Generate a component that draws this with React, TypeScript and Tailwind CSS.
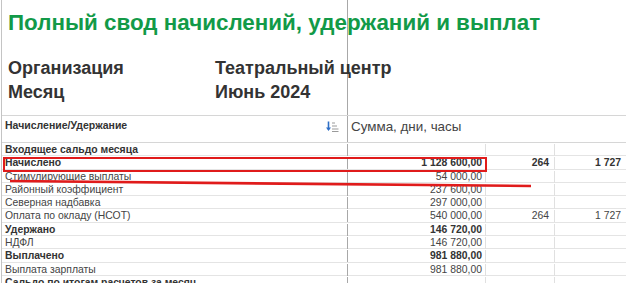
const rows = [
  { name: "Входящее сальдо месяца", sum: "", days: "", hours: "", bold: true },
  { name: "Начислено", sum: "1 128 600,00", days: "264", hours: "1 727", bold: true },
  { name: "Стимулирующие выплаты", sum: "54 000,00", days: "", hours: "" },
  { name: "Районный коэффициент", sum: "237 600,00", days: "", hours: "" },
  { name: "Северная надбавка", sum: "297 000,00", days: "", hours: "" },
  { name: "Оплата по окладу (НСОТ)", sum: "540 000,00", days: "264", hours: "1 727" },
  { name: "Удержано", sum: "146 720,00", days: "", hours: "", bold: true },
  { name: "НДФЛ", sum: "146 720,00", days: "", hours: "" },
  { name: "Выплачено", sum: "981 880,00", days: "", hours: "", bold: true },
  { name: "Выплата зарплаты", sum: "981 880,00", days: "", hours: "" },
  { name: "Сальдо по итогам расчетов за месяц", sum: "", days: "", hours: "", bold: true },
];

const SortIcon = () => (
  <svg width="13" height="11" viewBox="0 0 13 11" className="shrink-0">
    <path d="M2.5 0.5v8" stroke="#2f6fc6" strokeWidth="1.6" />
    <path d="M0 6.5l2.5 3.5 2.5-3.5z" fill="#2f6fc6" />
    <path d="M6 2h3M6 5h5M6 8h6.5M6 10.5h6.5" stroke="#9a9a9a" strokeWidth="1" />
  </svg>
);

export default function App() {
  return (
    <div
      className="relative w-[626px] h-[283px] overflow-hidden bg-white pl-px text-[#333]"
      style={{ fontFamily: '"Liberation Sans", Arial, sans-serif' }}
    >
      <div className="border-l border-[#c4c4c4] h-full flex flex-col">
        {/* report head */}
        <div className="grid grid-cols-[346px_1fr] h-[115px] shrink-0">
          <div className="border-r border-[#a8a8a8] pl-[6px] pt-[9px] whitespace-nowrap">
            <div className="text-[22.4px] leading-[28px] font-bold text-[#129a48]">
              Полный свод начислений, удержаний и выплат
            </div>
            <div className="mt-[19px] grid grid-cols-[207px_1fr] text-[18px] leading-[24px] font-bold text-[#333]">
              <span>Организация</span>
              <span>Театральный центр</span>
              <span>Месяц</span>
              <span>Июнь 2024</span>
            </div>
          </div>
          <div />
        </div>

        {/* table header */}
        <div className="grid grid-cols-[346px_1fr] h-[28px] shrink-0 border-y border-[#d6d6d6]">
          <div className="border-r border-[#a8a8a8] flex items-start justify-between pl-[3px] pr-[8px] pt-[3px]">
            <span className="text-[10.5px] font-bold text-[#333] leading-[13px]">Начисление/Удержание</span>
            <span className="pt-[2px]">
              <SortIcon />
            </span>
          </div>
          <div className="pl-[3px] pt-[2px] text-[13.4px] leading-[17px] text-[#444]">Сумма, дни, часы</div>
        </div>

        {/* table body */}
        <div className="flex flex-col">
          {rows.map((r, i) => (
            <div
              key={i}
              className={`grid grid-cols-[346px_138px_69px_1fr] h-[13.3px] border-b border-[#e4e4e4] text-[10.4px] leading-[12px] pt-px ${
                r.bold ? "font-bold text-[#333]" : "text-[#444]"
              }`}
            >
              <div className="border-r border-[#a8a8a8] pl-[3px] whitespace-nowrap">{r.name}</div>
              <div className="border-r border-[#e0e0e0] pr-[3px] text-right">{r.sum}</div>
              <div className="border-r border-[#e0e0e0] pr-[5px] text-right">{r.days}</div>
              <div className="pr-[5px] text-right">{r.hours}</div>
            </div>
          ))}
        </div>
      </div>

      {/* red annotations */}
      <div className="absolute left-[3px] top-[157px] w-[484px] h-[15px] border-[2.5px] border-[#e01b1b]" />
      <svg className="absolute left-0 top-0" width="626" height="283">
        <path d="M10 181 C 120 183, 300 185, 531 186" stroke="#e01b1b" strokeWidth="2.6" fill="none" />
      </svg>
    </div>
  );
}
